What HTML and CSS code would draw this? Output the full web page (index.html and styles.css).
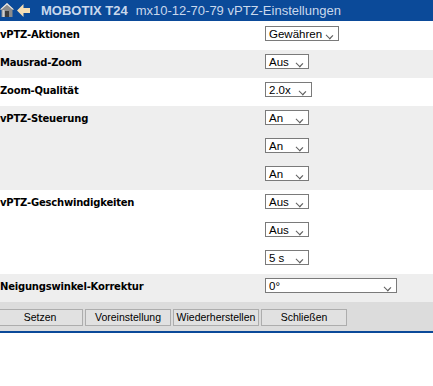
FILE: index.html
```html
<!DOCTYPE html>
<html lang="de">
<head>
    <meta charset="UTF-8">
    <meta name="viewport" content="width=device-width, initial-scale=1.0">
    <title>vPTZ-Einstellungen</title>
    <link rel="stylesheet" href="styles.css">
</head>
<body>
    <header class="topbar">
        <svg class="home" width="14" height="15" viewBox="0 0 14 15">
            <path d="M7 1 L0 7.5 L1.5 7.5 L1.5 15 L12.5 15 L12.5 7.5 L14 7.5 Z" fill="#8c8c8c"/>
            <path d="M7 1 L0 7.5 L1.5 7.5 L7 2.8 L12.5 7.5 L14 7.5 Z" fill="#e8e8e8"/>
            <rect x="5" y="9" width="4" height="6" fill="#3c3c3c"/>
            <rect x="2.5" y="8" width="2" height="7" fill="#cfcfcf"/>
        </svg>
        <svg class="back" width="13" height="13" viewBox="0 0 13 13">
            <path d="M0 6.5 L6.5 0 L6.5 4 L13 4 L13 9 L6.5 9 L6.5 13 Z" fill="#f6deb4"/>
        </svg>
        <span class="brand">MOBOTIX T24</span>
        <span class="page-title">mx10-12-70-79 vPTZ-Einstellungen</span>
    </header>

    <div class="settings">
        <div class="row first">
            <div class="label">vPTZ-Aktionen</div>
            <div class="controls">
                <div class="field"><span class="dropdown w74">Gewähren<i class="chev"></i></span></div>
            </div>
        </div>
        <div class="row shade">
            <div class="label">Mausrad-Zoom</div>
            <div class="controls">
                <div class="field"><span class="dropdown">Aus<i class="chev"></i></span></div>
            </div>
        </div>
        <div class="row">
            <div class="label">Zoom-Qualität</div>
            <div class="controls">
                <div class="field"><span class="dropdown w47">2.0x<i class="chev"></i></span></div>
            </div>
        </div>
        <div class="row shade">
            <div class="label">vPTZ-Steuerung</div>
            <div class="controls">
                <div class="field"><span class="dropdown">An<i class="chev"></i></span></div>
                <div class="field"><span class="dropdown">An<i class="chev"></i></span></div>
                <div class="field"><span class="dropdown">An<i class="chev"></i></span></div>
            </div>
        </div>
        <div class="row">
            <div class="label">vPTZ-Geschwindigkeiten</div>
            <div class="controls">
                <div class="field"><span class="dropdown">Aus<i class="chev"></i></span></div>
                <div class="field"><span class="dropdown">Aus<i class="chev"></i></span></div>
                <div class="field"><span class="dropdown">5 s<i class="chev"></i></span></div>
            </div>
        </div>
        <div class="row shade">
            <div class="label">Neigungswinkel-Korrektur</div>
            <div class="controls">
                <div class="field"><span class="dropdown w132">0°<i class="chev"></i></span></div>
            </div>
        </div>
        <div class="buttons">
            <button>Setzen</button>
            <button>Voreinstellung</button>
            <button>Wiederherstellen</button>
            <button>Schließen</button>
        </div>
    </div>
</body>
</html>
```

FILE: styles.css
```css
body {
    margin: 0;
    padding: 0;
    background-color: #fff;
    font-family: "Liberation Sans", Arial, sans-serif;
    overflow: hidden;
}

.topbar {
    height: 21px;
    display: flex;
    align-items: center;
    background-color: #0b4a99;
    color: #c9d8ec;
    font-size: 13px;
    white-space: nowrap;
}

.home {
    margin-left: 0;
    margin-top: -2px;
}

.back {
    margin-left: 3px;
}

.brand {
    font-weight: bold;
    margin-left: 11px;
}

.page-title {
    margin-left: 8px;
}

/* form is scrolled a few pixels to the left */
.settings {
    margin-left: -4px;
    width: 440px;
}

.row {
    display: flex;
    background-color: #fff;
}

.row.shade {
    background-color: #eeeeee;
}

.row.first {
    padding-top: 1px;
}

.label {
    width: 269px;
    padding-top: 7px;
    padding-left: 4px;
    box-sizing: border-box;
    font-family: "DejaVu Sans", Verdana, sans-serif;
    font-size: 10px;
    font-weight: bold;
    letter-spacing: -0.2px;
    color: #000;
}

.controls {
    display: flex;
    flex-direction: column;
}

.field {
    height: 28px;
    padding-top: 4px;
    box-sizing: border-box;
}

.dropdown {
    display: flex;
    align-items: center;
    width: 44px;
    height: 15px;
    box-sizing: border-box;
    border: 1px solid #7a7a7a;
    background-color: #fff;
    padding-left: 3px;
    font-family: "Liberation Sans", Arial, sans-serif;
    font-size: 11.5px;
    color: #000;
    position: relative;
}

.dropdown.w74 { width: 74px; }
.dropdown.w47 { width: 47px; }
.dropdown.w132 { width: 132px; }

.chev {
    position: absolute;
    right: 6px;
    top: 6px;
    width: 4px;
    height: 4px;
    border-right: 1px solid #606060;
    border-bottom: 1px solid #606060;
    transform: rotate(45deg) scaleX(1.2);
}

.buttons {
    display: flex;
    gap: 2px;
    height: 31px;
    padding-top: 7px;
    box-sizing: border-box;
    padding-left: 1px;
    background-color: #dcdcdc;
    border-bottom: 2px solid #0b4a99;
}

button {
    width: 86px;
    height: 17px;
    padding: 0;
    background-color: #e1e1e1;
    border: 1px solid #adadad;
    font-family: "Liberation Sans", Arial, sans-serif;
    font-size: 10.5px;
    color: #000;
    line-height: 13px;
}
```
